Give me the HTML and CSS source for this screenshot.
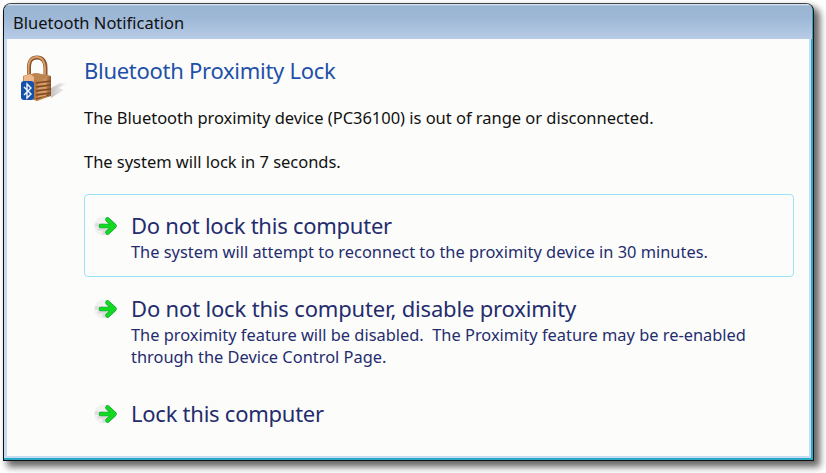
FILE: index.html
```html
<!DOCTYPE html>
<html lang="en">
<head>
    <meta charset="UTF-8">
    <meta name="viewport" content="width=device-width, initial-scale=1.0">
    <title>Bluetooth Notification</title>
    <link rel="stylesheet" href="styles.css">
</head>
<body>
    <svg width="0" height="0" class="defs">
        <symbol id="arrow" viewBox="0 0 24 24">
            <circle cx="9.5" cy="12" r="9.5" fill="#f1f1f1"/>
            <path d="M2.500 11h6M5 15h6l-1 4" stroke="#dcdcdc" stroke-width="3.500" fill="none" stroke-linecap="round" stroke-linejoin="round"/>
            <path d="M7 12H19M13.500 5.500l7 6.500-7 6.500" stroke="#1a9c35" stroke-width="4.600" fill="none" stroke-linecap="round" stroke-linejoin="round"/>
            <path d="M7 12H19M13.500 5.500l7 6.500-7 6.500" stroke="#12d922" stroke-width="3.600" fill="none" stroke-linecap="round" stroke-linejoin="round"/>
        </symbol>
    </svg>

    <div class="window">
        <div class="titlebar">Bluetooth Notification</div>
        <div class="content">
            <svg class="lock" viewBox="0 0 48 50" width="48" height="50">
                <defs>
                    <linearGradient id="brass" x1="0" x2="1">
                        <stop offset="0" stop-color="#c58b58"/>
                        <stop offset="0.45" stop-color="#b27644"/>
                        <stop offset="0.8" stop-color="#ce925a"/>
                        <stop offset="1" stop-color="#8a5630"/>
                    </linearGradient>
                    <linearGradient id="shade" x1="0" x2="1">
                        <stop offset="0" stop-color="#c4c4c2"/>
                        <stop offset="1" stop-color="#f4f4f2"/>
                    </linearGradient>
                </defs>
                <path d="M31 33l9-5 6 1-7 4 5 2-13 8z" fill="url(#shade)"/>
                <path d="M9 22V13C9 5 12 2.500 17 2.500S25.500 6 25.500 13v9" fill="none" stroke="#8a532b" stroke-width="4"/>
                <path d="M8.500 22V13C8.500 5 12 2 17 2s7.500 4 8 11v8" fill="none" stroke="#d99f6c" stroke-width="1.800"/>
                <path d="M3 21l13-3 15 3v20l-14 5-14-5z" fill="url(#brass)"/>
                <path d="M3 21l13-3 15 3-14 5z" fill="#bd8350"/>
                <path d="M4 21l6-2 4 3v5H4z" fill="#ecb789"/>
                <path d="M16 28l15-2M16 32l15-2M16 36l15-2M16 40l15-2M16 44l13-4" stroke="#7e4823" stroke-width="1.300"/>
                <path d="M18 29.500l8-1M18 33.500l8-1M18 37.500l8-1M18 41.500l8-1" stroke="#dfa773"/>
                <rect x="1" y="26" width="13" height="19" rx="3" fill="#1551ab"/>
                <path d="M4 32l7 7-4 4V29l4 4-7 7" fill="none" stroke="#f1f6fc" stroke-width="1.400"/>
            </svg>
            <div class="main">
                <h1>Bluetooth Proximity Lock</h1>
                <p class="message">The Bluetooth proximity device (PC36100) is out of range or disconnected.</p>
                <p class="message">The system will lock in 7 seconds.</p>

                <div class="option selected">
                    <svg class="arrow"><use href="#arrow"/></svg>
                    <div>
                        <h2>Do not lock this computer</h2>
                        <p>The system will attempt to reconnect to the proximity device in 30 minutes.</p>
                    </div>
                </div>
                <div class="option">
                    <svg class="arrow"><use href="#arrow"/></svg>
                    <div>
                        <h2 class="long">Do not lock this computer, disable proximity</h2>
                        <p>The proximity feature will be disabled.&nbsp; The Proximity feature may be re-enabled<br>through the Device Control Page.</p>
                    </div>
                </div>
                <div class="option last">
                    <svg class="arrow"><use href="#arrow"/></svg>
                    <h2>Lock this computer</h2>
                </div>
            </div>
        </div>
    </div>
</body>
</html>
```
FILE: styles.css
```css
* {
    box-sizing: border-box;
}
body {
    margin: 0;
    padding: 3px;
    height: 473px;
    overflow: hidden;
    background: #fff;
    font-family: "Noto Sans", "Open Sans", sans-serif;
    font-size: 16.5px;
    color: #111;
}
h1, h2, p {
    margin: 0;
    font-weight: normal;
    white-space: nowrap;
}
.defs {
    position: absolute;
}
.window {
    width: 811px;
    height: 458px;
    background: #fcfdfb;
    border: 1px solid #111;
    border-top-color: #444;
    border-radius: 8px 8px 0 0;
    overflow: hidden;
    box-shadow: inset -2px -2px 0 #28a9c6, inset -4px -4px 0 #c8dcf4, inset 3px 0 0 #c6daf1, 5px 5px 7px 1px rgba(0, 0, 0, 0.6);
}
.titlebar {
    height: 35px;
    margin-right: 1px;
    padding-left: 9px;
    line-height: 37px;
    background: linear-gradient(#e8f1fa 0, #9ab5d2 2px, #9db8d6 40%, #b8cce7);
}
.content {
    display: flex;
    padding-left: 16px;
}
.lock {
    flex: none;
    margin-top: 16px;
}
.main {
    width: 710px;
    margin-left: 16px;
    padding-top: 15px;
}
h1 {
    font-size: 22px;
    line-height: 32px;
    letter-spacing: -0.28px;
    color: #1f50a8;
}
.message {
    margin-top: 20px;
    line-height: 24px;
    letter-spacing: -0.03px;
}
.option {
    display: flex;
    height: 83px;
    padding: 16px 0 0 10px;
    border: 1px solid transparent;
    border-radius: 4px;
    color: #252c6e;
}
.selected {
    margin-top: 20px;
    border-color: #9be3f8;
}
.option h2 {
    font-size: 22px;
    line-height: 28px;
    letter-spacing: -0.25px;
}
.option h2.long {
    letter-spacing: -0.17px;
}
.option p {
    font-size: 16.4px;
    line-height: 22px;
    margin-top: 2px;
}
.option.last {
    margin-top: 22px;
}
.arrow {
    flex: none;
    width: 24px;
    height: 24px;
    margin: 3px 13px 0 -1px;
}
```
